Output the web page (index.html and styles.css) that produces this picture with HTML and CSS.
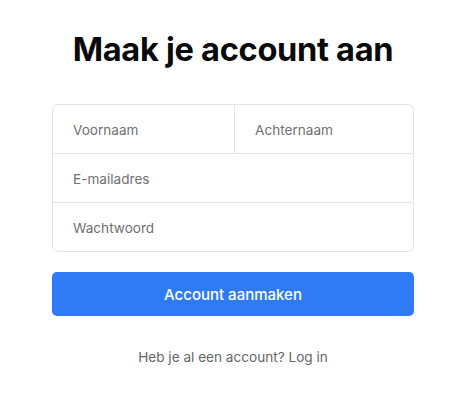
FILE: index.html
```html
<!DOCTYPE html>
<html lang="nl">
<head>
<meta charset="utf-8">
<link rel="stylesheet" href="styles.css">
</head>
<body>
<main class="page">
  <h1 class="title">Maak je account aan</h1>
  <form class="form">
    <div class="fields">
      <div class="row split">
        <input class="field" type="text" placeholder="Voornaam">
        <input class="field" type="text" placeholder="Achternaam">
      </div>
      <div class="row">
        <input class="field" type="email" placeholder="E-mailadres">
      </div>
      <div class="row">
        <input class="field" type="password" placeholder="Wachtwoord">
      </div>
    </div>
    <button class="submit" type="button">Account aanmaken</button>
  </form>
  <p class="login">Heb je al een account? Log in</p>
</main>
</body>
</html>
```
FILE: styles.css
```css
* { box-sizing: border-box; }
html, body { margin: 0; background: #fff; }
body { font-family: Inter, "Noto Sans", sans-serif; color: #111; }
.page {
  width: 474px;
  padding: 27px 60px 0 52px;
  display: flex;
  flex-direction: column;
  align-items: stretch;
}
.title {
  margin: 0;
  font-size: 32.6px;
  font-weight: 700;
  letter-spacing: -0.3px;
  text-align: center;
  line-height: 44px;
  color: #0a0a0a;
}
.form {
  margin-top: 33px;
  display: flex;
  flex-direction: column;
  gap: 20px;
}
.fields {
  border: 1px solid #e3e3e3;
  border-radius: 6px;
  display: flex;
  flex-direction: column;
}
.row {
  display: flex;
  height: 48px;
}
.row + .row { border-top: 1px solid #e3e3e3; height: 49px; }
.split .field:first-child { border-right: 1px solid #e3e3e3; flex: 0 0 182px; }
.field {
  flex: 1;
  min-width: 0;
  border: 0;
  background: transparent;
  padding: 2px 20px 0;
  font-family: Inter, "Noto Sans", sans-serif;
  font-size: 13.6px;
  color: #222;
  outline: none;
}
.field::placeholder { color: #707070; }
.submit {
  height: 44px;
  border: 0;
  border-radius: 5px;
  background: #2f7bf6;
  color: #fff;
  font-family: Inter, "Noto Sans", sans-serif;
  font-size: 15px;
  font-weight: 500;
}
.login {
  margin: 33px 0 0;
  text-align: center;
  font-size: 13.6px;
  color: #666;
}
```
